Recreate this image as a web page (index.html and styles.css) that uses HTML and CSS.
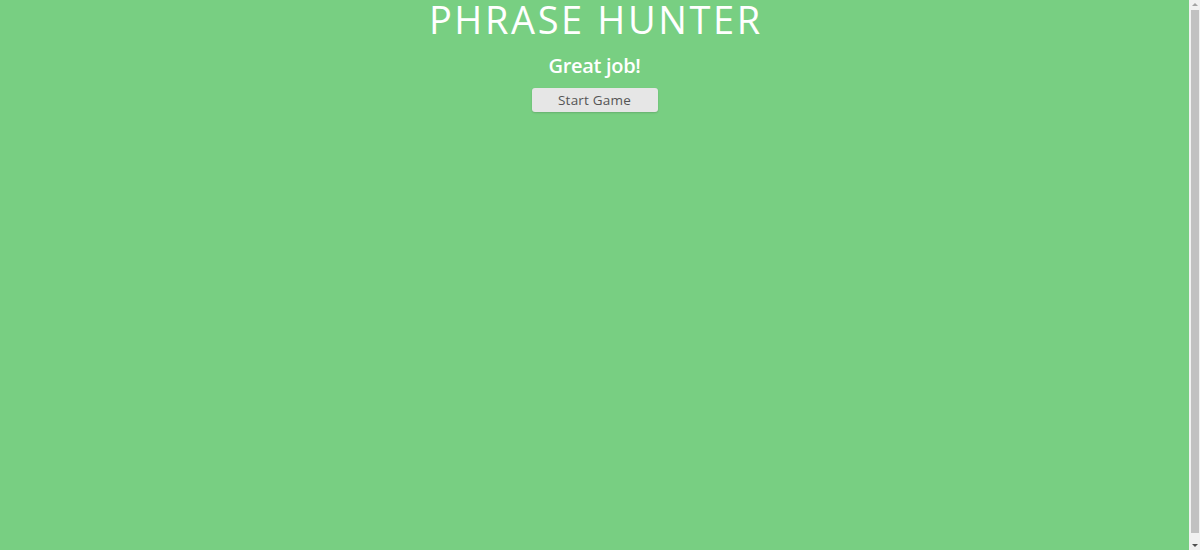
FILE: index.html
```html
<!DOCTYPE html>
<html lang="en">
<head>
<meta charset="utf-8">
<title>Phrase Hunter</title>
<link rel="stylesheet" href="styles.css">
</head>
<body>
<div class="overlay win">
  <h2 class="title">PHRASE HUNTER</h2>
  <h1 class="game-over-message">Great job!</h1>
  <button class="btn-reset">Start Game</button>
</div>
<div class="scrollbar" aria-hidden="true">
  <span class="arrow arrow-up"></span>
  <span class="thumb"></span>
  <span class="arrow arrow-down"></span>
</div>
</body>
</html>
```

FILE: styles.css
```css
html, body {
  margin: 0;
  padding: 0;
  overflow: hidden;
}

body {
  font-family: "Open Sans", "Noto Sans", sans-serif;
}

.overlay {
  display: flex;
  flex-direction: column;
  align-items: center;
  box-sizing: border-box;
  min-height: 100vh;
  padding-right: 11px;
  color: #fff;
}

.win {
  background-color: #78cf82;
}

.title {
  margin: 0;
  padding-left: 2.6px;
  font-size: 38px;
  font-weight: 500;
  line-height: 39px;
  letter-spacing: 2.6px;
}

.game-over-message {
  margin: 14px 0 0;
  font-size: 20px;
  font-weight: 600;
  line-height: 26px;
  letter-spacing: -0.3px;
}

.btn-reset {
  margin-top: 9px;
  width: 126px;
  height: 24px;
  padding: 0;
  border: none;
  border-radius: 3px;
  background: #e6e6e6;
  color: #555;
  font-family: "Open Sans", "Noto Sans", sans-serif;
  font-size: 13.5px;
  letter-spacing: 0.2px;
  box-shadow: 0 1px 2px rgba(0, 0, 0, 0.15);
  cursor: pointer;
}

/* drawn browser scrollbar */
.scrollbar {
  position: fixed;
  top: 0;
  right: 0;
  bottom: 0;
  width: 11px;
  background: #f1f1f1;
}

.thumb {
  position: absolute;
  top: 10px;
  bottom: 17px;
  left: 2px;
  right: 1px;
  background: #c1c1c1;
}

.arrow {
  position: absolute;
  left: 3px;
  width: 0;
  height: 0;
  border-left: 3px solid transparent;
  border-right: 3px solid transparent;
}

.arrow-up {
  top: 3px;
  border-bottom: 3px solid #a3a3a3;
}

.arrow-down {
  bottom: 3px;
  border-top: 3px solid #505050;
}
```
